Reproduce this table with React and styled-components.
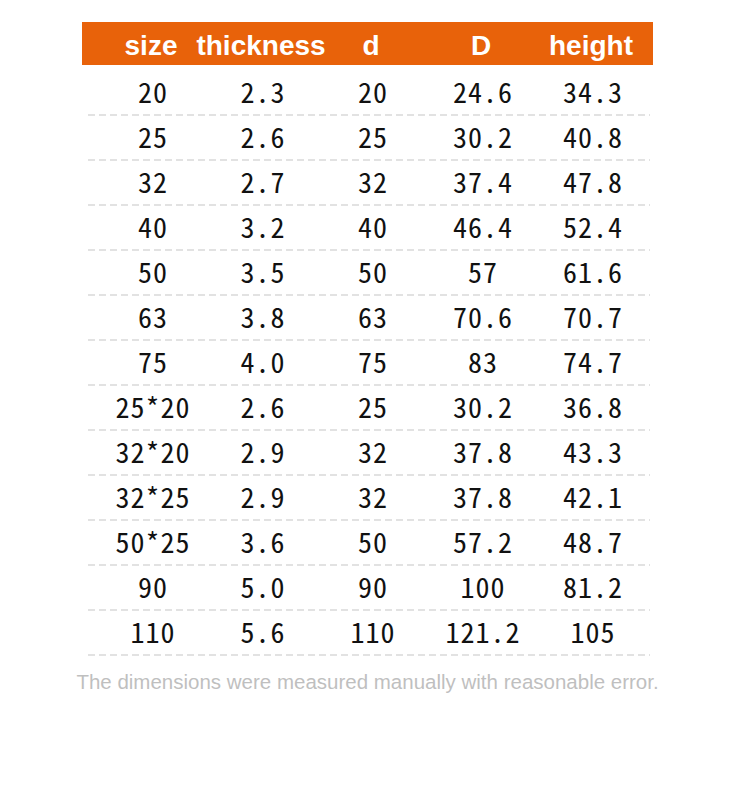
import React from 'react';
import styled, {createGlobalStyle} from "styled-components";

const GlobalStyle = createGlobalStyle`
  html, body {
    margin: 0;
    padding: 0;
    background: #ffffff;
  }
`;

const Page = styled.div`
  width: 750px;
  height: 812px;
  padding: 22px 0 0 82px;
  box-sizing: border-box;
`;

const Table = styled.div`
  width: 571px;
  display: flex;
  flex-direction: column;
`;

const HeaderRow = styled.div`
  height: 43px;
  background-color: #e8620a;
  display: grid;
  grid-template-columns: 14px repeat(5, 110px);
  align-items: center;
  margin-bottom: 6px;
`;

const HeaderCell = styled.div`
  grid-column: ${(props) => props.col + 2};
  justify-self: center;
  white-space: nowrap;
  color: #ffffff;
  font-family: "Liberation Sans", Arial, sans-serif;
  font-weight: bold;
  font-size: 28px;
  line-height: 43px;
  padding-top: 2px;
`;

const DataRow = styled.div`
  height: 45px;
  margin: 0 3px 0 6px;
  display: grid;
  grid-template-columns: 10px repeat(5, 110px);
  align-items: center;
  background-image: repeating-linear-gradient(to right, #e2e2e2 0 7px, transparent 7px 11px);
  background-size: 100% 2px;
  background-position: left bottom;
  background-repeat: no-repeat;
`;

const DataCell = styled.div`
  grid-column: ${(props) => props.col + 2};
  justify-self: center;
  white-space: nowrap;
  color: #111111;
  font-family: "Noto Sans Mono CJK SC", "Noto Sans CJK SC", "DejaVu Sans Mono", monospace;
  font-size: 28px;
  letter-spacing: 1px;
  line-height: 40px;
  padding-bottom: 5px;
`;

const Note = styled.div`
  margin-top: 14px;
  align-self: center;
  white-space: nowrap;
  color: #bfbfbf;
  font-family: "Liberation Sans", Arial, sans-serif;
  font-size: 20.5px;
`;

const columns = ["size", "thickness", "d", "D", "height"];

const rows = [
    ["20", "2.3", "20", "24.6", "34.3"],
    ["25", "2.6", "25", "30.2", "40.8"],
    ["32", "2.7", "32", "37.4", "47.8"],
    ["40", "3.2", "40", "46.4", "52.4"],
    ["50", "3.5", "50", "57", "61.6"],
    ["63", "3.8", "63", "70.6", "70.7"],
    ["75", "4.0", "75", "83", "74.7"],
    ["25*20", "2.6", "25", "30.2", "36.8"],
    ["32*20", "2.9", "32", "37.8", "43.3"],
    ["32*25", "2.9", "32", "37.8", "42.1"],
    ["50*25", "3.6", "50", "57.2", "48.7"],
    ["90", "5.0", "90", "100", "81.2"],
    ["110", "5.6", "110", "121.2", "105"],
];

const App = () => {
    return (
        <>
            <GlobalStyle/>
            <Page>
                <Table>
                    <HeaderRow>
                        {columns.map((name, i) => (
                            <HeaderCell key={name} col={i}>{name}</HeaderCell>
                        ))}
                    </HeaderRow>
                    {rows.map((row, r) => (
                        <DataRow key={r}>
                            {row.map((value, i) => (
                                <DataCell key={i} col={i}>{value}</DataCell>
                            ))}
                        </DataRow>
                    ))}
                    <Note>The dimensions were measured manually with reasonable error.</Note>
                </Table>
            </Page>
        </>
    );
};

export default App;
